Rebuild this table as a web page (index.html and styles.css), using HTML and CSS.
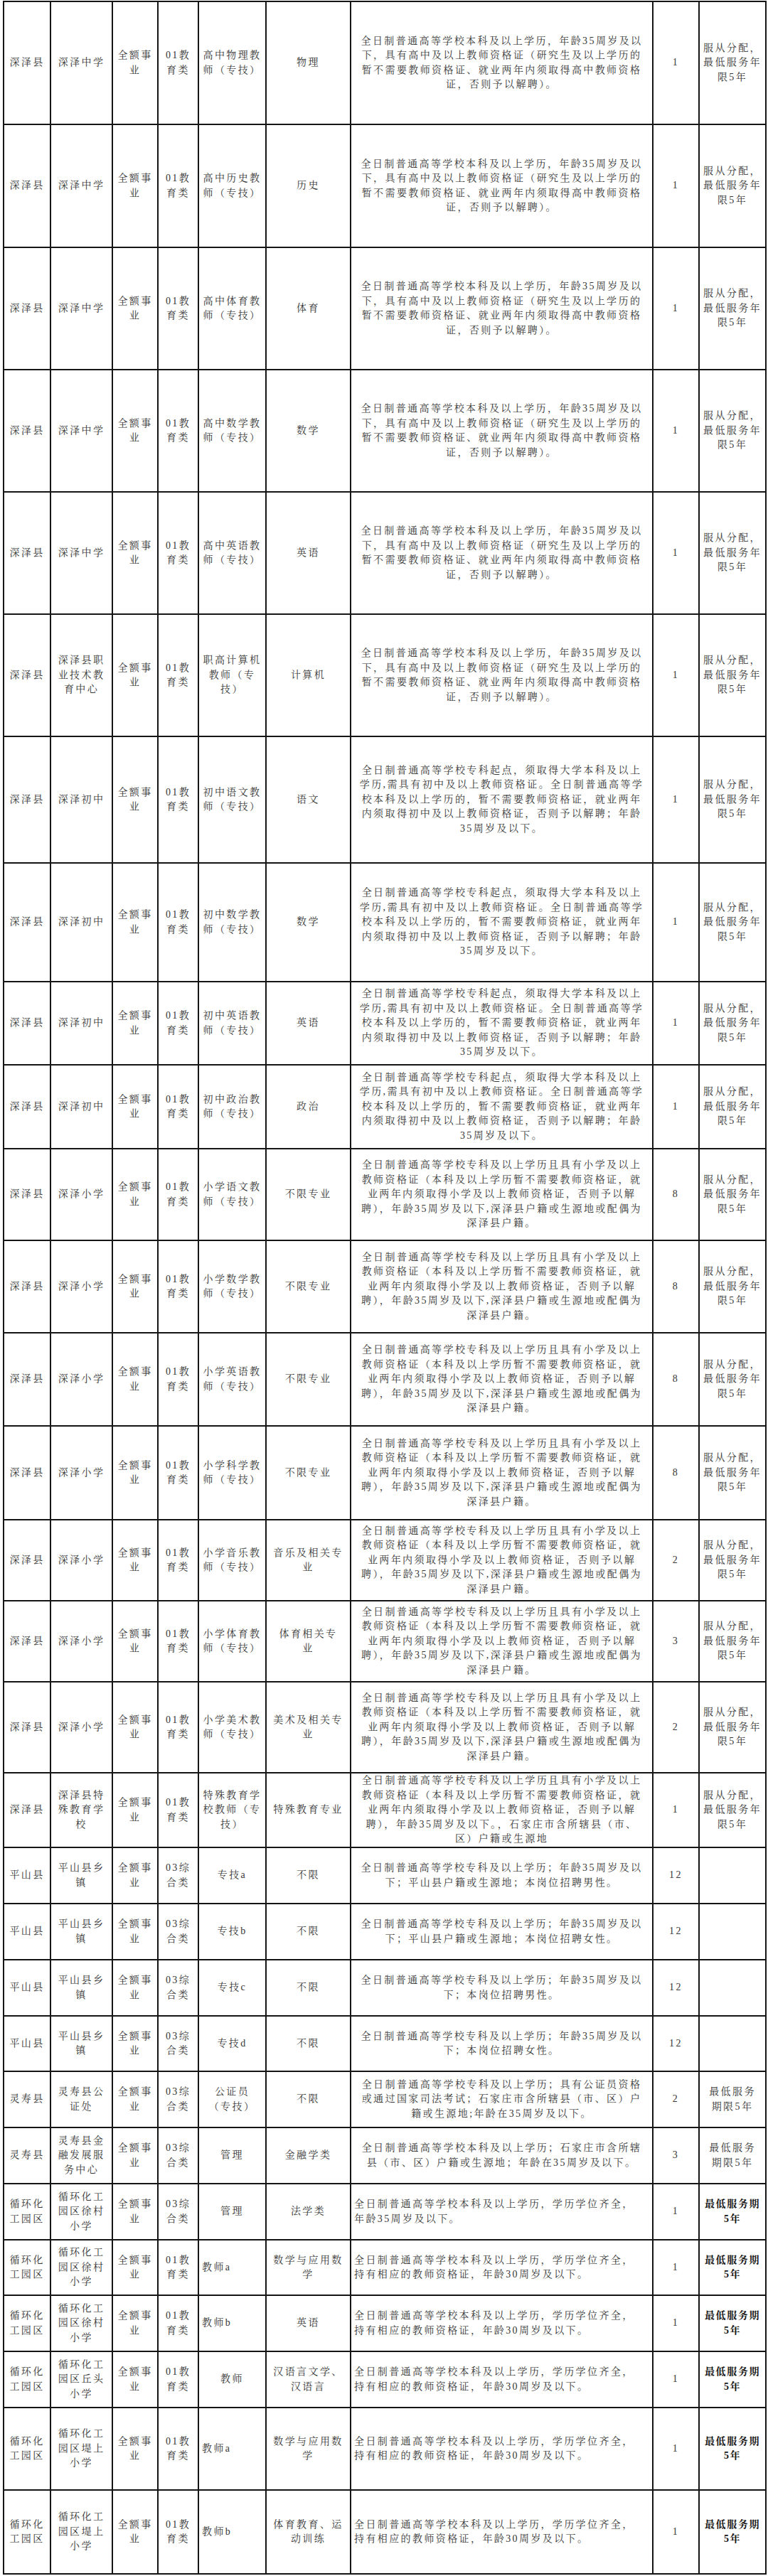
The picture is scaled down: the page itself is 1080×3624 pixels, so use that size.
FILE: index.html
```html
<!DOCTYPE html>
<html lang="zh-CN">
<head>
<meta charset="utf-8">
<title>岗位信息表</title>
<link rel="stylesheet" href="styles.css">
</head>
<body>
<table class="posts">
<colgroup>
<col class="c1"><col class="c2"><col class="c3"><col class="c4"><col class="c5"><col class="c6"><col class="c7"><col class="c8"><col class="c9">
</colgroup>
<tbody>
<tr class="h173"><td>深泽县</td><td>深泽中学</td><td>全额事<br>业</td><td>01教<br>育类</td><td>高中物理教<br>师（专技）</td><td>物理</td><td class="desc">全日制普通高等学校本科及以上学历，年龄35周岁及以<br>下，具有高中及以上教师资格证（研究生及以上学历的<br>暂不需要教师资格证、就业两年内须取得高中教师资格<br>证，否则予以解聘）。</td><td>1</td><td>服从分配，<br>最低服务年<br>限5年</td></tr>
<tr class="h173"><td>深泽县</td><td>深泽中学</td><td>全额事<br>业</td><td>01教<br>育类</td><td>高中历史教<br>师（专技）</td><td>历史</td><td class="desc">全日制普通高等学校本科及以上学历，年龄35周岁及以<br>下，具有高中及以上教师资格证（研究生及以上学历的<br>暂不需要教师资格证、就业两年内须取得高中教师资格<br>证，否则予以解聘）。</td><td>1</td><td>服从分配，<br>最低服务年<br>限5年</td></tr>
<tr class="h172"><td>深泽县</td><td>深泽中学</td><td>全额事<br>业</td><td>01教<br>育类</td><td>高中体育教<br>师（专技）</td><td>体育</td><td class="desc">全日制普通高等学校本科及以上学历，年龄35周岁及以<br>下，具有高中及以上教师资格证（研究生及以上学历的<br>暂不需要教师资格证、就业两年内须取得高中教师资格<br>证，否则予以解聘）。</td><td>1</td><td>服从分配，<br>最低服务年<br>限5年</td></tr>
<tr class="h172"><td>深泽县</td><td>深泽中学</td><td>全额事<br>业</td><td>01教<br>育类</td><td>高中数学教<br>师（专技）</td><td>数学</td><td class="desc">全日制普通高等学校本科及以上学历，年龄35周岁及以<br>下，具有高中及以上教师资格证（研究生及以上学历的<br>暂不需要教师资格证、就业两年内须取得高中教师资格<br>证，否则予以解聘）。</td><td>1</td><td>服从分配，<br>最低服务年<br>限5年</td></tr>
<tr class="h172"><td>深泽县</td><td>深泽中学</td><td>全额事<br>业</td><td>01教<br>育类</td><td>高中英语教<br>师（专技）</td><td>英语</td><td class="desc">全日制普通高等学校本科及以上学历，年龄35周岁及以<br>下，具有高中及以上教师资格证（研究生及以上学历的<br>暂不需要教师资格证、就业两年内须取得高中教师资格<br>证，否则予以解聘）。</td><td>1</td><td>服从分配，<br>最低服务年<br>限5年</td></tr>
<tr class="h172"><td>深泽县</td><td>深泽县职<br>业技术教<br>育中心</td><td>全额事<br>业</td><td>01教<br>育类</td><td>职高计算机<br>教师（专<br>技）</td><td>计算机</td><td class="desc">全日制普通高等学校本科及以上学历，年龄35周岁及以<br>下，具有高中及以上教师资格证（研究生及以上学历的<br>暂不需要教师资格证、就业两年内须取得高中教师资格<br>证，否则予以解聘）。</td><td>1</td><td>服从分配，<br>最低服务年<br>限5年</td></tr>
<tr class="h178"><td>深泽县</td><td>深泽初中</td><td>全额事<br>业</td><td>01教<br>育类</td><td>初中语文教<br>师（专技）</td><td>语文</td><td class="desc">全日制普通高等学校专科起点，须取得大学本科及以上<br>学历,需具有初中及以上教师资格证。全日制普通高等学<br>校本科及以上学历的，暂不需要教师资格证，就业两年<br>内须取得初中及以上教师资格证，否则予以解聘；年龄<br>35周岁及以下。</td><td>1</td><td>服从分配，<br>最低服务年<br>限5年</td></tr>
<tr class="h167"><td>深泽县</td><td>深泽初中</td><td>全额事<br>业</td><td>01教<br>育类</td><td>初中数学教<br>师（专技）</td><td>数学</td><td class="desc">全日制普通高等学校专科起点，须取得大学本科及以上<br>学历,需具有初中及以上教师资格证。全日制普通高等学<br>校本科及以上学历的，暂不需要教师资格证，就业两年<br>内须取得初中及以上教师资格证，否则予以解聘；年龄<br>35周岁及以下。</td><td>1</td><td>服从分配，<br>最低服务年<br>限5年</td></tr>
<tr class="h117"><td>深泽县</td><td>深泽初中</td><td>全额事<br>业</td><td>01教<br>育类</td><td>初中英语教<br>师（专技）</td><td>英语</td><td class="desc">全日制普通高等学校专科起点，须取得大学本科及以上<br>学历,需具有初中及以上教师资格证。全日制普通高等学<br>校本科及以上学历的，暂不需要教师资格证，就业两年<br>内须取得初中及以上教师资格证，否则予以解聘；年龄<br>35周岁及以下。</td><td>1</td><td>服从分配，<br>最低服务年<br>限5年</td></tr>
<tr class="h118"><td>深泽县</td><td>深泽初中</td><td>全额事<br>业</td><td>01教<br>育类</td><td>初中政治教<br>师（专技）</td><td>政治</td><td class="desc">全日制普通高等学校专科起点，须取得大学本科及以上<br>学历,需具有初中及以上教师资格证。全日制普通高等学<br>校本科及以上学历的，暂不需要教师资格证，就业两年<br>内须取得初中及以上教师资格证，否则予以解聘；年龄<br>35周岁及以下。</td><td>1</td><td>服从分配，<br>最低服务年<br>限5年</td></tr>
<tr class="h129"><td>深泽县</td><td>深泽小学</td><td>全额事<br>业</td><td>01教<br>育类</td><td>小学语文教<br>师（专技）</td><td>不限专业</td><td class="desc">全日制普通高等学校专科及以上学历且具有小学及以上<br>教师资格证（本科及以上学历暂不需要教师资格证，就<br>业两年内须取得小学及以上教师资格证，否则予以解<br>聘），年龄35周岁及以下,深泽县户籍或生源地或配偶为<br>深泽县户籍。</td><td>8</td><td>服从分配，<br>最低服务年<br>限5年</td></tr>
<tr class="h130"><td>深泽县</td><td>深泽小学</td><td>全额事<br>业</td><td>01教<br>育类</td><td>小学数学教<br>师（专技）</td><td>不限专业</td><td class="desc">全日制普通高等学校专科及以上学历且具有小学及以上<br>教师资格证（本科及以上学历暂不需要教师资格证，就<br>业两年内须取得小学及以上教师资格证，否则予以解<br>聘），年龄35周岁及以下,深泽县户籍或生源地或配偶为<br>深泽县户籍。</td><td>8</td><td>服从分配，<br>最低服务年<br>限5年</td></tr>
<tr class="h131"><td>深泽县</td><td>深泽小学</td><td>全额事<br>业</td><td>01教<br>育类</td><td>小学英语教<br>师（专技）</td><td>不限专业</td><td class="desc">全日制普通高等学校专科及以上学历且具有小学及以上<br>教师资格证（本科及以上学历暂不需要教师资格证，就<br>业两年内须取得小学及以上教师资格证，否则予以解<br>聘），年龄35周岁及以下,深泽县户籍或生源地或配偶为<br>深泽县户籍。</td><td>8</td><td>服从分配，<br>最低服务年<br>限5年</td></tr>
<tr class="h132"><td>深泽县</td><td>深泽小学</td><td>全额事<br>业</td><td>01教<br>育类</td><td>小学科学教<br>师（专技）</td><td>不限专业</td><td class="desc">全日制普通高等学校专科及以上学历且具有小学及以上<br>教师资格证（本科及以上学历暂不需要教师资格证，就<br>业两年内须取得小学及以上教师资格证，否则予以解<br>聘），年龄35周岁及以下,深泽县户籍或生源地或配偶为<br>深泽县户籍。</td><td>8</td><td>服从分配，<br>最低服务年<br>限5年</td></tr>
<tr class="h114"><td>深泽县</td><td>深泽小学</td><td>全额事<br>业</td><td>01教<br>育类</td><td>小学音乐教<br>师（专技）</td><td>音乐及相关专<br>业</td><td class="desc">全日制普通高等学校专科及以上学历且具有小学及以上<br>教师资格证（本科及以上学历暂不需要教师资格证，就<br>业两年内须取得小学及以上教师资格证，否则予以解<br>聘），年龄35周岁及以下,深泽县户籍或生源地或配偶为<br>深泽县户籍。</td><td>2</td><td>服从分配，<br>最低服务年<br>限5年</td></tr>
<tr class="h114"><td>深泽县</td><td>深泽小学</td><td>全额事<br>业</td><td>01教<br>育类</td><td>小学体育教<br>师（专技）</td><td>体育相关专<br>业</td><td class="desc">全日制普通高等学校专科及以上学历且具有小学及以上<br>教师资格证（本科及以上学历暂不需要教师资格证，就<br>业两年内须取得小学及以上教师资格证，否则予以解<br>聘），年龄35周岁及以下,深泽县户籍或生源地或配偶为<br>深泽县户籍。</td><td>3</td><td>服从分配，<br>最低服务年<br>限5年</td></tr>
<tr class="h128"><td>深泽县</td><td>深泽小学</td><td>全额事<br>业</td><td>01教<br>育类</td><td>小学美术教<br>师（专技）</td><td>美术及相关专<br>业</td><td class="desc">全日制普通高等学校专科及以上学历且具有小学及以上<br>教师资格证（本科及以上学历暂不需要教师资格证，就<br>业两年内须取得小学及以上教师资格证，否则予以解<br>聘），年龄35周岁及以下,深泽县户籍或生源地或配偶为<br>深泽县户籍。</td><td>2</td><td>服从分配，<br>最低服务年<br>限5年</td></tr>
<tr class="h105"><td>深泽县</td><td>深泽县特<br>殊教育学<br>校</td><td>全额事<br>业</td><td>01教<br>育类</td><td>特殊教育学<br>校教师（专<br>技）</td><td>特殊教育专业</td><td class="desc">全日制普通高等学校专科及以上学历且具有小学及以上<br>教师资格证（本科及以上学历暂不需要教师资格证，就<br>业两年内须取得小学及以上教师资格证，否则予以解<br>聘），年龄35周岁及以下。，石家庄市含所辖县（市、<br>区）户籍或生源地</td><td>1</td><td>服从分配，<br>最低服务年<br>限5年</td></tr>
<tr class="h79"><td>平山县</td><td>平山县乡<br>镇</td><td>全额事<br>业</td><td>03综<br>合类</td><td>专技a</td><td>不限</td><td class="desc">全日制普通高等学校专科及以上学历；年龄35周岁及以<br>下；平山县户籍或生源地；本岗位招聘男性。</td><td>12</td><td></td></tr>
<tr class="h79"><td>平山县</td><td>平山县乡<br>镇</td><td>全额事<br>业</td><td>03综<br>合类</td><td>专技b</td><td>不限</td><td class="desc">全日制普通高等学校专科及以上学历；年龄35周岁及以<br>下；平山县户籍或生源地；本岗位招聘女性。</td><td>12</td><td></td></tr>
<tr class="h79"><td>平山县</td><td>平山县乡<br>镇</td><td>全额事<br>业</td><td>03综<br>合类</td><td>专技c</td><td>不限</td><td class="desc">全日制普通高等学校专科及以上学历；年龄35周岁及以<br>下；本岗位招聘男性。</td><td>12</td><td></td></tr>
<tr class="h78"><td>平山县</td><td>平山县乡<br>镇</td><td>全额事<br>业</td><td>03综<br>合类</td><td>专技d</td><td>不限</td><td class="desc">全日制普通高等学校专科及以上学历；年龄35周岁及以<br>下；本岗位招聘女性。</td><td>12</td><td></td></tr>
<tr class="h79"><td>灵寿县</td><td>灵寿县公<br>证处</td><td>全额事<br>业</td><td>03综<br>合类</td><td>公证员<br>（专技）</td><td>不限</td><td class="desc">全日制普通高等学校专科及以上学历；具有公证员资格<br>或通过国家司法考试；石家庄市含所辖县（市、区）户<br>籍或生源地;年龄在35周岁及以下。</td><td>2</td><td>最低服务<br>期限5年</td></tr>
<tr class="h79"><td>灵寿县</td><td>灵寿县金<br>融发展服<br>务中心</td><td>全额事<br>业</td><td>03综<br>合类</td><td>管理</td><td>金融学类</td><td class="desc">全日制普通高等学校本科及以上学历；石家庄市含所辖<br>县（市、区）户籍或生源地；年龄在35周岁及以下。</td><td>3</td><td>最低服务<br>期限5年</td></tr>
<tr class="h79"><td>循环化<br>工园区</td><td>循环化工<br>园区徐村<br>小学</td><td>全额事<br>业</td><td>03综<br>合类</td><td>管理</td><td>法学类</td><td class="desc left">全日制普通高等学校本科及以上学历，学历学位齐全，<br>年龄35周岁及以下。</td><td>1</td><td class="strong">最低服务期<br>5年</td></tr>
<tr class="h78"><td>循环化<br>工园区</td><td>循环化工<br>园区徐村<br>小学</td><td>全额事<br>业</td><td>01教<br>育类</td><td class="left">教师a</td><td>数学与应用数<br>学</td><td class="desc left">全日制普通高等学校本科及以上学历，学历学位齐全，<br>持有相应的教师资格证，年龄30周岁及以下。</td><td>1</td><td class="strong">最低服务期<br>5年</td></tr>
<tr class="h79"><td>循环化<br>工园区</td><td>循环化工<br>园区徐村<br>小学</td><td>全额事<br>业</td><td>01教<br>育类</td><td class="left">教师b</td><td>英语</td><td class="desc left">全日制普通高等学校本科及以上学历，学历学位齐全，<br>持有相应的教师资格证，年龄30周岁及以下。</td><td>1</td><td class="strong">最低服务期<br>5年</td></tr>
<tr class="h79"><td>循环化<br>工园区</td><td>循环化工<br>园区丘头<br>小学</td><td>全额事<br>业</td><td>01教<br>育类</td><td>教师</td><td>汉语言文学、<br>汉语言</td><td class="desc left">全日制普通高等学校本科及以上学历，学历学位齐全，<br>持有相应的教师资格证，年龄30周岁及以下。</td><td>1</td><td class="strong">最低服务期<br>5年</td></tr>
<tr class="h116"><td>循环化<br>工园区</td><td>循环化工<br>园区堤上<br>小学</td><td>全额事<br>业</td><td>01教<br>育类</td><td class="left">教师a</td><td>数学与应用数<br>学</td><td class="desc left">全日制普通高等学校本科及以上学历，学历学位齐全，<br>持有相应的教师资格证，年龄30周岁及以下。</td><td>1</td><td class="strong">最低服务期<br>5年</td></tr>
<tr class="h118"><td>循环化<br>工园区</td><td>循环化工<br>园区堤上<br>小学</td><td>全额事<br>业</td><td>01教<br>育类</td><td class="left">教师b</td><td>体育教育、运<br>动训练</td><td class="desc left">全日制普通高等学校本科及以上学历，学历学位齐全，<br>持有相应的教师资格证，年龄30周岁及以下。</td><td>1</td><td class="strong">最低服务期<br>5年</td></tr>
</tbody>
</table>
</body>
</html>
```
FILE: styles.css
```css
html, body {
  margin: 0;
  padding: 0;
  background: #ffffff;
}

body {
  padding: 1px 0 0 4px;
  font-family: "Liberation Serif", "Noto Serif CJK SC", "Noto Sans CJK SC", serif;
  color: #363636;
}

.posts {
  border-collapse: collapse;
  table-layout: fixed;
  width: 1074px;
}

.c1 { width: 66px; }
.c2 { width: 87px; }
.c3 { width: 64px; }
.c4 { width: 57px; }
.c5 { width: 95px; }
.c6 { width: 119px; }
.c7 { width: 425px; }
.c8 { width: 65px; }
.c9 { width: 94px; }

.posts td {
  border: 2px solid #151515;
  padding: 0 2px;
  text-align: center;
  vertical-align: middle;
  font-size: 14px;
  line-height: 20.5px;
  letter-spacing: 2.4px;
  white-space: nowrap;
  overflow: hidden;
}

.posts td.desc {
  padding: 0 3px;
}

.posts td.left {
  text-align: left;
  padding-left: 4px;
}

.posts td.strong {
  font-weight: 700;
  color: #161616;
  letter-spacing: 1.6px;
}

.h173 { height: 173px; }
.h172 { height: 172px; }
.h178 { height: 178px; }
.h167 { height: 167px; }
.h132 { height: 132px; }
.h131 { height: 131px; }
.h130 { height: 130px; }
.h129 { height: 129px; }
.h128 { height: 128px; }
.h118 { height: 118px; }
.h117 { height: 117px; }
.h116 { height: 116px; }
.h114 { height: 114px; }
.h105 { height: 105px; }
.h79 { height: 79px; }
.h78 { height: 78px; }
```
